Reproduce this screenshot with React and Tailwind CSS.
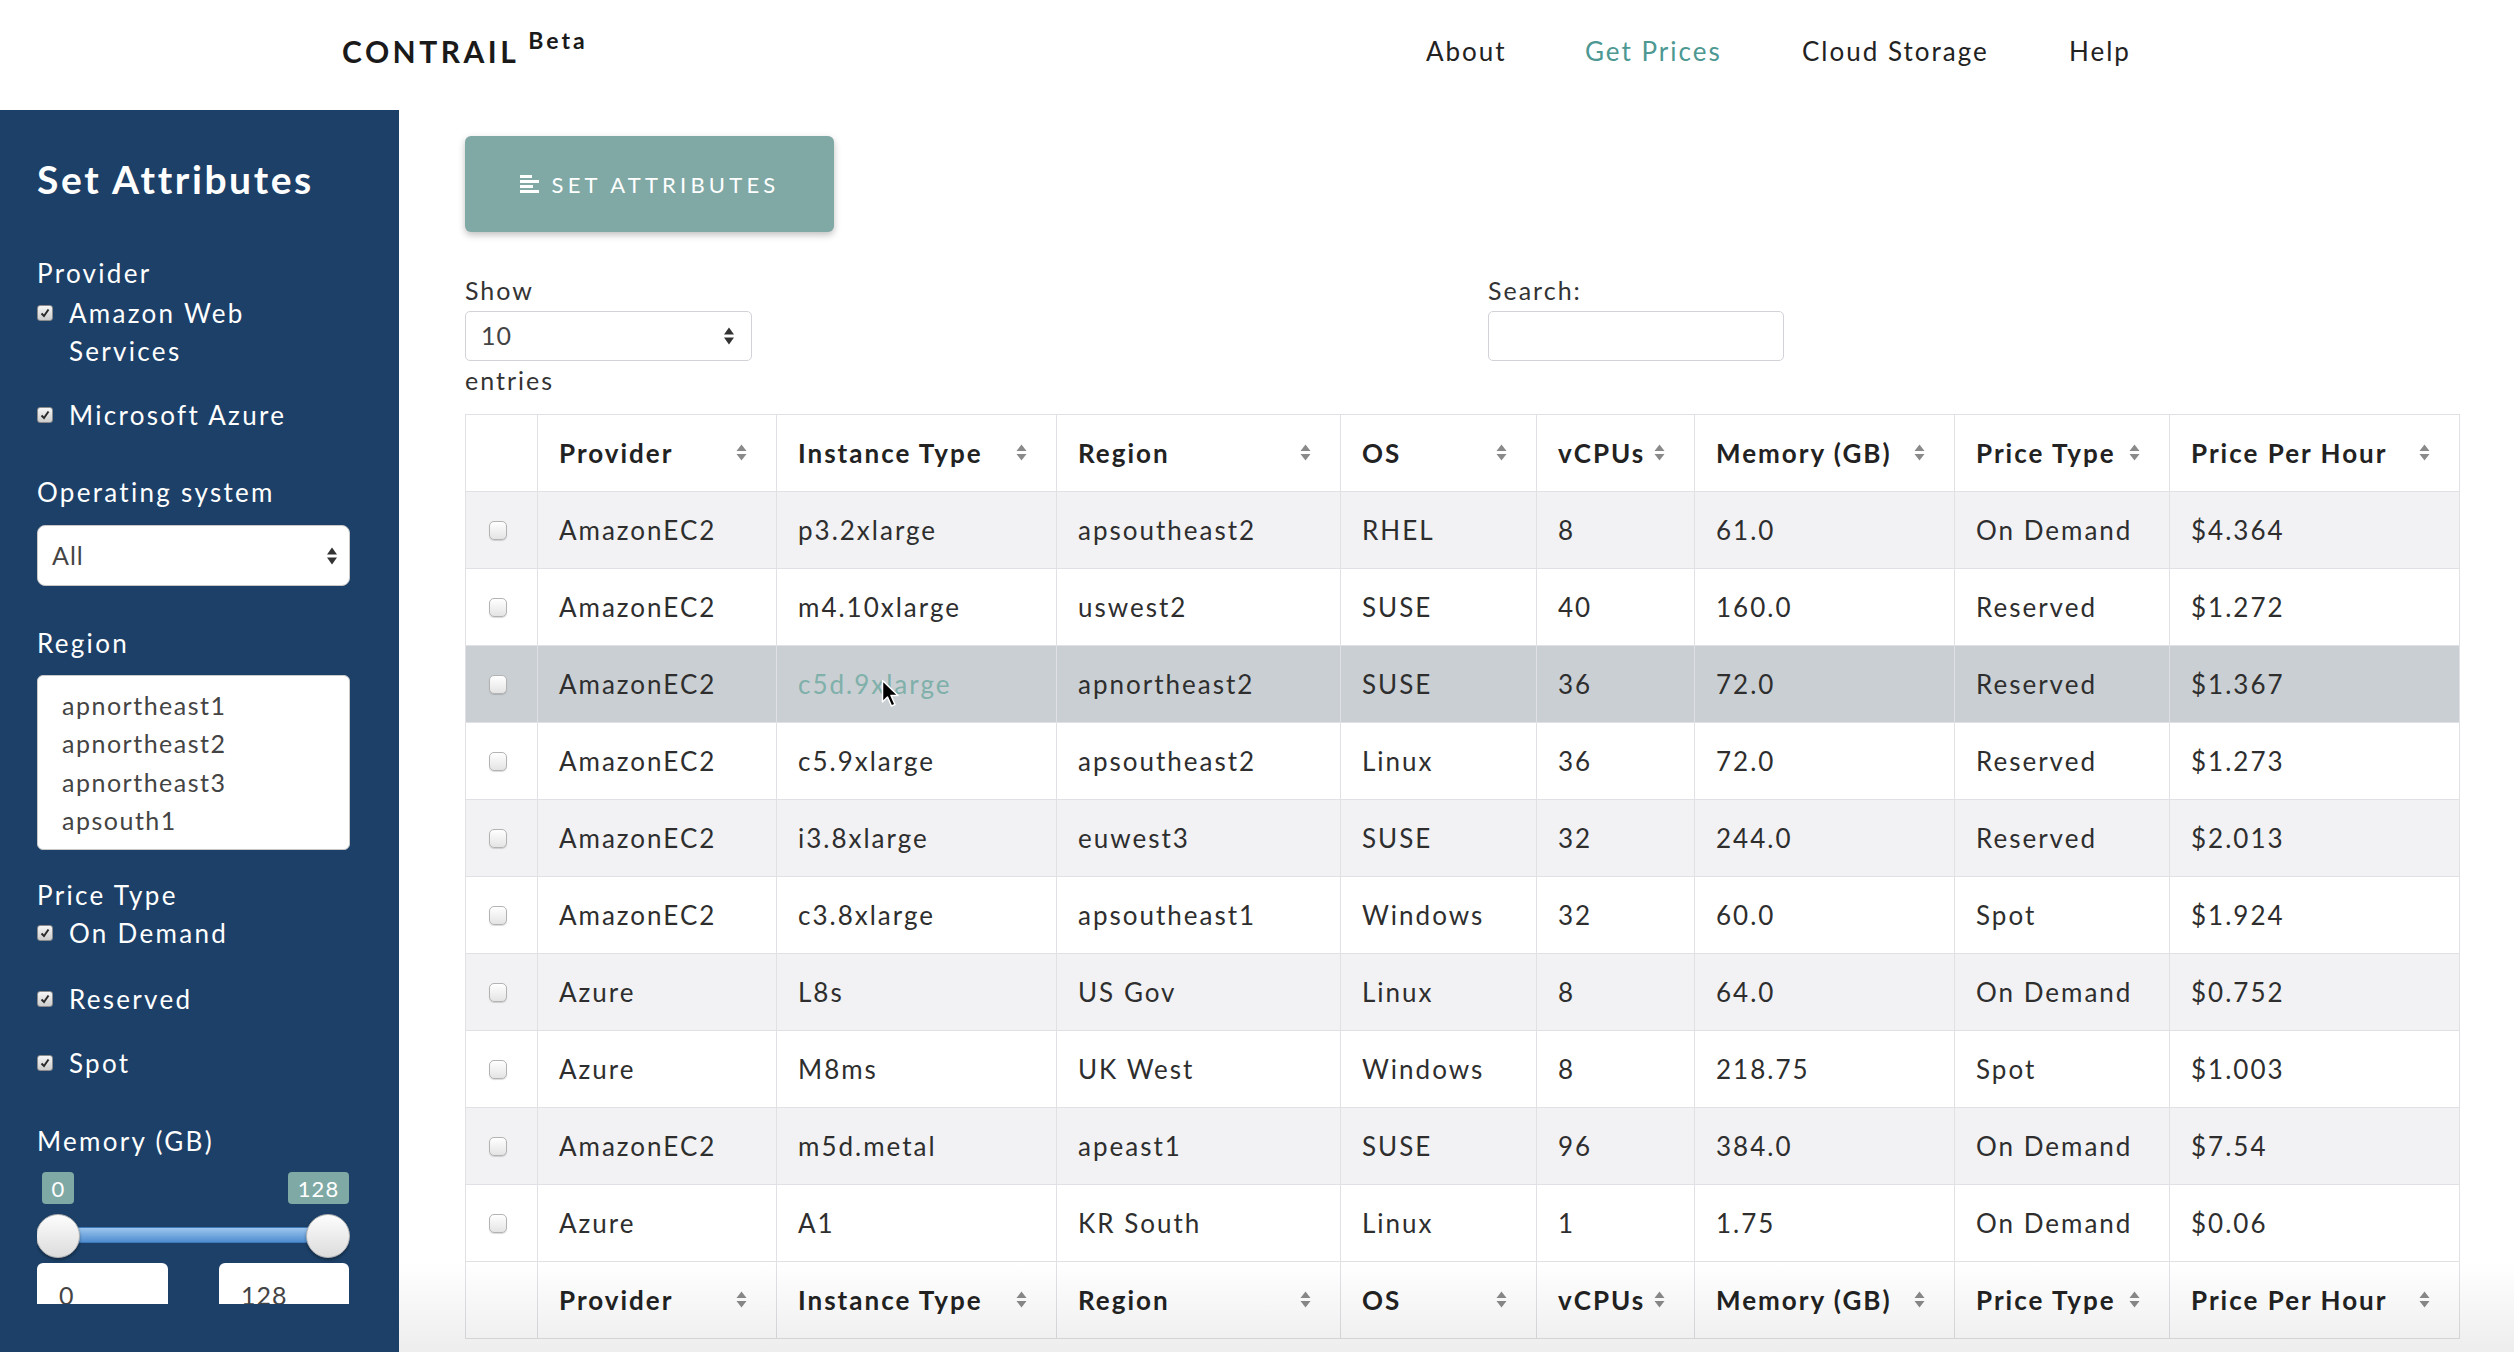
import React from 'react'

const rows = [
  ['AmazonEC2', 'p3.2xlarge', 'apsoutheast2', 'RHEL', '8', '61.0', 'On Demand', '$4.364'],
  ['AmazonEC2', 'm4.10xlarge', 'uswest2', 'SUSE', '40', '160.0', 'Reserved', '$1.272'],
  ['AmazonEC2', 'c5d.9xlarge', 'apnortheast2', 'SUSE', '36', '72.0', 'Reserved', '$1.367'],
  ['AmazonEC2', 'c5.9xlarge', 'apsoutheast2', 'Linux', '36', '72.0', 'Reserved', '$1.273'],
  ['AmazonEC2', 'i3.8xlarge', 'euwest3', 'SUSE', '32', '244.0', 'Reserved', '$2.013'],
  ['AmazonEC2', 'c3.8xlarge', 'apsoutheast1', 'Windows', '32', '60.0', 'Spot', '$1.924'],
  ['Azure', 'L8s', 'US Gov', 'Linux', '8', '64.0', 'On Demand', '$0.752'],
  ['Azure', 'M8ms', 'UK West', 'Windows', '8', '218.75', 'Spot', '$1.003'],
  ['AmazonEC2', 'm5d.metal', 'apeast1', 'SUSE', '96', '384.0', 'On Demand', '$7.54'],
  ['Azure', 'A1', 'KR South', 'Linux', '1', '1.75', 'On Demand', '$0.06'],
]

const columns = ['Provider', 'Instance Type', 'Region', 'OS', 'vCPUs', 'Memory (GB)', 'Price Type', 'Price Per Hour']

const SortIcon = () => (
  <svg width="13" height="17" viewBox="0 0 13 17" className="shrink-0">
    <path d="M6.5 0.5 L11.5 7 H1.5 Z" fill="#8a8a8a" />
    <path d="M6.5 16.5 L11.5 10 H1.5 Z" fill="#8a8a8a" />
  </svg>
)

const SelectArrows = () => (
  <svg width="12" height="18" viewBox="0 0 12 18">
    <path d="M6 0.5 L11 7.5 H1 Z" fill="#333" />
    <path d="M6 17.5 L11 10.5 H1 Z" fill="#333" />
  </svg>
)

const Checked = ({ children, className = '' }) => (
  <div className={`flex items-start ${className}`}>
    <span className="mt-[11px] flex h-[16px] w-[16px] shrink-0 items-center justify-center rounded-[3px] border border-[#8c8c8c] bg-linear-to-b from-[#f6f6f6] to-[#cdcdcd]">
      <svg width="10" height="10" viewBox="0 0 10 10">
        <path d="M1.5 5.5 L4 8 L8.5 1.5" fill="none" stroke="#2b2b2b" strokeWidth="2" />
      </svg>
    </span>
    <span className="ml-[16px] leading-[38px]">{children}</span>
  </div>
)

const HeaderRow = () => (
  <tr className="bg-white">
    <th className="h-[77px] border border-[#e1e1e5]" />
    {columns.map(c => (
      <th key={c} className="h-[77px] border border-[#e1e1e5] pl-[21px] pr-[28px] text-left">
        <div className="flex items-center justify-between">
          <span className="whitespace-nowrap text-[26px] font-bold tracking-[2px] text-[#222]">{c}</span>
          <span className="-mt-[2px]"><SortIcon /></span>
        </div>
      </th>
    ))}
  </tr>
)

const Sidebar = () => (
  <aside className="w-[399px] shrink-0 bg-[#1c4068] pl-[37px] pr-[49px] text-white">
    <div className="h-[1194px] overflow-hidden text-[26px] tracking-[2.3px]">
      <h2 className="mt-[47px] text-[39px] font-bold leading-[44px] tracking-[2.6px]">Set Attributes</h2>

      <div className="mt-[53px] leading-[38px]">Provider</div>
      <Checked className="mt-[2px]">Amazon Web<br />Services</Checked>
      <Checked className="mt-[26px]">Microsoft Azure</Checked>

      <div className="mt-[39px] leading-[38px]">Operating system</div>
      <div className="mt-[14px] flex h-[61px] items-center justify-between rounded-[8px] border border-[#c8c8c8] bg-white pl-[14px] pr-[11px] text-[25px] tracking-[1px] text-[#444]">
        <span>All</span>
        <SelectArrows />
      </div>

      <div className="mt-[38px] leading-[38px]">Region</div>
      <div className="mt-[13px] h-[175px] overflow-hidden rounded-[6px] border border-[#c8c8c8] bg-white pl-[24px] pt-[10px] text-[25px] leading-[38.3px] tracking-[1.5px] text-[#444]">
        <div>apnortheast1</div>
        <div>apnortheast2</div>
        <div>apnortheast3</div>
        <div>apsouth1</div>
        <div>apsoutheast1</div>
      </div>

      <div className="mt-[26px] leading-[38px]">Price Type</div>
      <Checked>On Demand</Checked>
      <Checked className="mt-[28px]">Reserved</Checked>
      <Checked className="mt-[26px]">Spot</Checked>

      <div className="mt-[40px] leading-[38px]">Memory (GB)</div>
      <div className="mt-[12px] flex justify-between">
        <span className="ml-[5px] flex h-[32px] w-[32px] items-center justify-center rounded-[4px] bg-[#7fa9a5] text-[22px] tracking-normal">0</span>
        <span className="mr-[1px] flex h-[32px] w-[61px] items-center justify-center rounded-[4px] bg-[#7fa9a5] text-[22px] tracking-[1px]">128</span>
      </div>
      <div className="relative mt-[10px] h-[44px]">
        <div className="absolute left-[20px] right-[20px] top-[13px] h-[16px] rounded-[3px] border border-[#3f78b8] bg-linear-to-b from-[#9cc6ee] to-[#4f8dd0]" />
        <div className="absolute -left-[1px] top-0 h-[44px] w-[44px] rounded-full border border-[#b3b3b3] bg-linear-to-b from-[#fdfdfd] to-[#dcdcdc] shadow-[0_2px_3px_rgba(0,0,0,0.35)]" />
        <div className="absolute right-0 top-0 h-[44px] w-[44px] rounded-full border border-[#b3b3b3] bg-linear-to-b from-[#fdfdfd] to-[#dcdcdc] shadow-[0_2px_3px_rgba(0,0,0,0.35)]" />
      </div>
      <div className="mt-[5px] flex justify-between text-[25px] tracking-[1px] text-[#444]">
        <div className="flex h-[66px] w-[131px] items-center rounded-[6px] bg-white pl-[22px]">0</div>
        <div className="mr-[1px] flex h-[66px] w-[130px] items-center rounded-[6px] bg-white pl-[22px]">128</div>
      </div>
    </div>
  </aside>
)

export default function App() {
  return (
    <div className="relative h-[1352px] w-[2514px] overflow-hidden bg-white font-['Lato','Open_Sans',sans-serif] text-[#333]">
      <header className="flex h-[110px]">
        <div className="w-[1426px] pl-[342px]">
          <div className="mt-[36px] flex items-start text-[#1a1a1a]">
            <span className="text-[30px] font-bold leading-none tracking-[3.5px]">CONTRAIL</span>
            <span className="-mt-[7px] ml-[9px] text-[23px] font-bold leading-none tracking-[3px]">Beta</span>
          </div>
        </div>
        <nav className="mt-[38px] flex text-[26px] leading-none tracking-[2px] text-[#222]">
          <a className="w-[159px]">About</a>
          <a className="w-[217px] text-[#4d9892]">Get Prices</a>
          <a className="w-[267px]">Cloud Storage</a>
          <a>Help</a>
        </nav>
      </header>

      <div className="flex h-[1242px]">
        <Sidebar />

        <main className="relative flex-1 pl-[66px] pr-[55px]">
          <button className="mt-[26px] flex h-[96px] w-[369px] items-center justify-center gap-[13px] rounded-[6px] bg-[#80a9a6] text-[22px] tracking-[4.2px] text-white shadow-[0_3px_7px_rgba(0,0,0,0.25)]">
            <svg width="19" height="18" viewBox="0 0 19 18">
              <rect x="0" y="0" width="12" height="3" fill="#fff" />
              <rect x="0" y="5" width="19" height="3" fill="#fff" />
              <rect x="0" y="10" width="13" height="3" fill="#fff" />
              <rect x="0" y="15" width="19" height="3" fill="#fff" />
            </svg>
            <span>SET ATTRIBUTES</span>
          </button>

          <div className="mt-[39px] flex text-[25px] tracking-[2px]">
            <div className="w-[1023px]">
              <div className="leading-[38px]">Show</div>
              <div className="mt-[2px] flex h-[50px] w-[287px] items-center justify-between rounded-[5px] border border-[#d2d2d8] bg-white pl-[15px] pr-[16px] tracking-[1px] text-[#444]">
                <span>10</span>
                <SelectArrows />
              </div>
              <div className="leading-[38px]">entries</div>
            </div>
            <div>
              <div className="leading-[38px]">Search:</div>
              <div className="mt-[2px] h-[50px] w-[296px] rounded-[5px] border border-[#d2d2d8] bg-white" />
            </div>
          </div>

          <table className="mt-[15px] w-[1994px] table-fixed border-collapse border border-[#e1e1e5]">
            <colgroup>
              <col className="w-[72px]" />
              <col className="w-[239px]" />
              <col className="w-[280px]" />
              <col className="w-[284px]" />
              <col className="w-[196px]" />
              <col className="w-[158px]" />
              <col className="w-[260px]" />
              <col className="w-[215px]" />
              <col className="w-[290px]" />
            </colgroup>
            <thead>
              <HeaderRow />
            </thead>
            <tbody>
              {rows.map((r, i) => (
                <tr key={i} className={i === 2 ? 'bg-[#cacfd3]' : i % 2 === 0 ? 'bg-[#f2f2f4]' : 'bg-white'}>
                  <td className="h-[77px] border border-[#e1e1e5] pl-[23px]">
                    <div className="h-[19px] w-[18px] rounded-[5px] border border-[#b3b3b3] bg-linear-to-b from-white to-[#e4e4e4] shadow-[0_1px_1px_rgba(0,0,0,0.15)]" />
                  </td>
                  {r.map((v, j) => (
                    <td key={j} className={`h-[77px] whitespace-nowrap border border-[#e1e1e5] pl-[21px] text-[26px] tracking-[2px] ${i === 2 && j === 1 ? 'text-[#7fb0aa]' : 'text-[#2e2e2e]'}`}>
                      {v}
                    </td>
                  ))}
                </tr>
              ))}
            </tbody>
            <tfoot>
              <HeaderRow />
            </tfoot>
          </table>

          <div className="pointer-events-none absolute bottom-0 left-0 right-0 h-[90px] bg-linear-to-b from-transparent to-[rgba(0,0,0,0.07)]" />
        </main>
      </div>

      <svg width="19" height="29" viewBox="0 0 19 29" className="pointer-events-none absolute left-[881px] top-[679px]">
        <path d="M1.5 1.5 L1.5 23 L6.5 18 L10.5 27 L14 25.5 L10 16.5 L17 16.5 Z" fill="#000" stroke="#fff" strokeWidth="1.5" strokeLinejoin="round" />
      </svg>
    </div>
  )
}
